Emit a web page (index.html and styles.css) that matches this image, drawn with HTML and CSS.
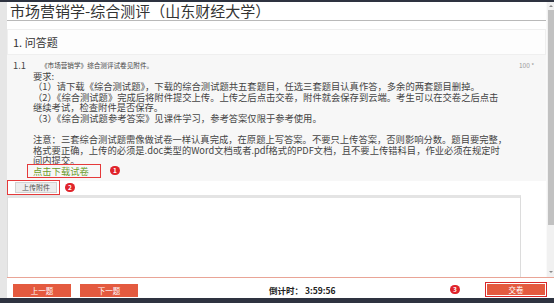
FILE: index.html
```html
<!DOCTYPE html>
<html lang="zh-CN">
<head>
<meta charset="utf-8">
<title>市场营销学-综合测评</title>
<link rel="stylesheet" href="styles.css">
</head>
<body>
<div class="bar-top"></div>
<div class="frame">
  <div class="side"></div>
  <div class="main">
    <div class="scroll">
      <div class="content">
        <div class="title">市场营销学-综合测评（山东财经大学）</div>
        <div class="sec-head">1. 问答题</div>
        <div class="question">
          <div class="q-no">1.1</div>
          <div class="q-body">
            <p class="p-first">《市场营销学》综合测评试卷见附件。</p>
            <p class="p-ind">要求:</p>
            <p class="p-ind">（1）请下载《综合测试题》，下载的综合测试题共五套题目，任选三套题目认真作答，多余的两套题目删掉。</p>
            <p class="p-ind">（2）《综合测试题》完成后将附件提交上传。上传之后点击交卷，附件就会保存到云端。考生可以在交卷之后点击<br>继续考试，检查附件是否保存。</p>
            <p class="p-ind">（3）《综合测试题参考答案》见课件学习，参考答案仅限于参考使用。</p>
            <p class="p-note">注意：三套综合测试题需像做试卷一样认真完成，在原题上写答案。不要只上传答案，否则影响分数。题目要完整，<br>格式要正确，上传的必须是.doc类型的Word文档或者.pdf格式的PDF文档，且不要上传错科目，作业必须在规定时<br>间内提交。</p>
            <div class="dl-row"><span class="dl-link">点击下载试卷</span><span class="badge">1</span></div>
          </div>
          <div class="q-score">100 *</div>
        </div>
        <div class="upload-row">
          <div class="mark"><span class="upload-btn">上传附件</span></div>
          <span class="badge badge-2">2</span>
        </div>
        <div class="editor-wrap"><div class="editor"></div></div>
      </div>
      <div class="scrollbar">
        <div class="sb-up"></div>
        <div class="sb-thumb"></div>
        <div class="sb-track"></div>
        <div class="sb-down"></div>
      </div>
    </div>
    <div class="footer">
      <span class="btn-nav">上一题</span>
      <span class="btn-nav btn-next">下一题</span>
      <span class="timer">倒计时： 3:59:56</span>
      <span class="badge badge-3">3</span>
      <span class="submit-mark"><span class="btn-submit">交卷</span></span>
    </div>
  </div>
</div>
<div class="bar-bottom"></div>
</body>
</html>
```

FILE: styles.css
```css
* { box-sizing: border-box; }
html, body {
  margin: 0;
  padding: 0;
  width: 554px;
  height: 303px;
  overflow: hidden;
  background: #fff;
  font-family: "Noto Sans CJK SC", "Noto Sans", sans-serif;
  color: #444;
}
p { margin: 0; }

.bar-top { height: 2px; background: #2e3340; position: relative; z-index: 2; }
.bar-bottom { height: 5px; background: #2e3340; }

.frame { display: flex; height: 296px; }
.side { width: 7px; background: #e6e6e6; flex: none; }
.main { flex: 1; display: flex; flex-direction: column; min-width: 0; }

.scroll { display: flex; height: 275px; }
.content { flex: 1; display: flex; flex-direction: column; min-width: 0; }

.title {
  height: 19px;
  padding-left: 3px;
  font-size: 15px;
  line-height: 18px;
  color: #333;
  border-bottom: 1px solid #b9b9b9;
  white-space: nowrap;
}

.sec-head {
  margin-top: 8px;
  height: 26px;
  border: 1px solid #efefef;
  background: #fdfdfd;
  padding-left: 5px;
  font-size: 11px;
  line-height: 24px;
  color: #333;
}

.question {
  display: flex;
  background: #f7f7f7;
  padding: 5px 0 3px 6px;
  font-size: 9.3px;
  line-height: 10.5px;
  color: #444;
}
.q-no { width: 12px; flex: none; }
.q-body { flex: 1; white-space: nowrap; }
.p-first { padding-left: 16px; font-size: 6.6px; }
.p-ind { padding-left: 8px; }
.p-note { margin-top: 11px; padding-left: 8px; }
.q-score {
  width: 27px;
  flex: none;
  font-size: 6.5px;
  line-height: 10px;
  color: #9a9a9a;
}

.dl-row { display: flex; align-items: center; margin-top: -2px; padding-left: 2px; }
.dl-link {
  height: 14px;
  border: 1px solid #e5393a;
  padding: 0 11px 0 5px;
  line-height: 12px;
  color: #6c9c2c;
}

.badge {
  display: inline-flex;
  align-items: center;
  justify-content: center;
  width: 10px;
  height: 9px;
  border-radius: 5px;
  background: #e0242b;
  color: #fff;
  font-size: 6.5px;
  font-weight: bold;
  line-height: 9px;
  margin-left: 9px;
}

.upload-row { display: flex; align-items: center; height: 14px; }
.mark {
  margin-top: -1px;
  width: 53px;
  height: 15px;
  border: 1px solid #e5393a;
  padding: 1px 0 0 7px;
}
.upload-btn {
  display: block;
  width: 42px;
  height: 11px;
  background: #ededed;
  border: 1px solid #d2d2d2;
  font-size: 7px;
  line-height: 9px;
  text-align: center;
  color: #555;
}
.badge-2 { margin-left: 5px; }

.editor-wrap { flex: 1; padding-right: 25px; min-height: 0; }
.editor {
  height: 100%;
  border-top: 3px solid #e4e4e4;
  border-left: 1px solid #dcdcdc;
  border-right: 1px solid #dcdcdc;
}

.scrollbar {
  width: 8px;
  flex: none;
  background: #f1f1f1;
  border-left: 1px solid #fafafa;
  display: flex;
  flex-direction: column;
  align-items: center;
}
.sb-up, .sb-down { height: 8px; flex: none; position: relative; width: 100%; }
.sb-up::after, .sb-down::after {
  content: "";
  position: absolute;
  left: 2px;
  border-left: 2px solid transparent;
  border-right: 2px solid transparent;
}
.sb-up::after { top: 3px; border-bottom: 2px solid #8a8a8a; }
.sb-down::after { top: 2px; border-top: 2px solid #8a8a8a; }
.sb-thumb { width: 6px; height: 215px; background: #c1c1c1; flex: none; }
.sb-track { flex: 1; }

.footer {
  height: 21px;
  border-top: 1px solid #e9a496;
  background: #fff;
  display: flex;
  align-items: flex-start;
  padding-top: 6px;
  padding-left: 6px;
}
.btn-nav {
  width: 58px;
  height: 13px;
  background: #e45a3f;
  color: #fff;
  font-size: 7.5px;
  line-height: 13px;
  text-align: center;
}
.btn-next { margin-left: 9px; }
.timer {
  margin-left: 131px;
  font-size: 8.5px;
  line-height: 13px;
  font-weight: bold;
  color: #222;
  white-space: pre;
}
.badge-3 { margin-left: auto; margin-right: 25px; margin-top: 1px; }
.submit-mark {
  margin-top: -2px;
  margin-right: 7px;
  width: 62px;
  height: 15px;
  border: 1px solid #d9282a;
  padding: 1px;
  display: flex;
}
.btn-submit {
  flex: 1;
  background: #e45a3f;
  color: #fff;
  font-size: 7.5px;
  line-height: 11px;
  text-align: center;
}
```
